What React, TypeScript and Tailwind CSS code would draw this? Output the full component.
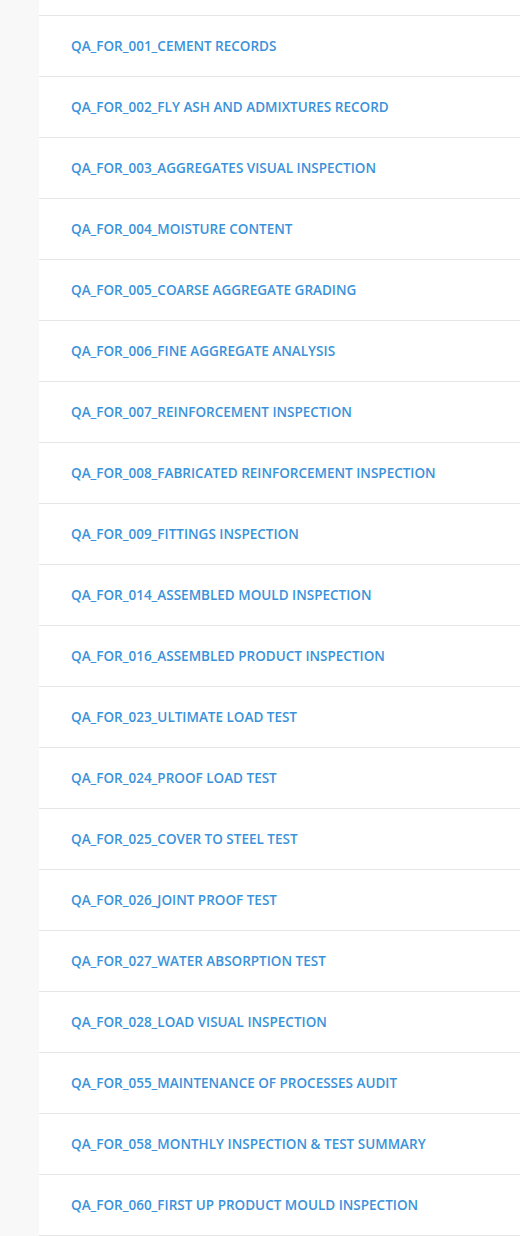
const forms = [
  "QA_FOR_001_CEMENT RECORDS",
  "QA_FOR_002_FLY ASH AND ADMIXTURES RECORD",
  "QA_FOR_003_AGGREGATES VISUAL INSPECTION",
  "QA_FOR_004_MOISTURE CONTENT",
  "QA_FOR_005_COARSE AGGREGATE GRADING",
  "QA_FOR_006_FINE AGGREGATE ANALYSIS",
  "QA_FOR_007_REINFORCEMENT INSPECTION",
  "QA_FOR_008_FABRICATED REINFORCEMENT INSPECTION",
  "QA_FOR_009_FITTINGS INSPECTION",
  "QA_FOR_014_ASSEMBLED MOULD INSPECTION",
  "QA_FOR_016_ASSEMBLED PRODUCT INSPECTION",
  "QA_FOR_023_ULTIMATE LOAD TEST",
  "QA_FOR_024_PROOF LOAD TEST",
  "QA_FOR_025_COVER TO STEEL TEST",
  "QA_FOR_026_JOINT PROOF TEST",
  "QA_FOR_027_WATER ABSORPTION TEST",
  "QA_FOR_028_LOAD VISUAL INSPECTION",
  "QA_FOR_055_MAINTENANCE OF PROCESSES AUDIT",
  "QA_FOR_058_MONTHLY INSPECTION & TEST SUMMARY",
  "QA_FOR_060_FIRST UP PRODUCT MOULD INSPECTION",
];

export default function App() {
  return (
    <div className="flex h-[1236px] w-[520px] overflow-hidden bg-[#f8f8f8] font-['Open_Sans',sans-serif]">
      <div className="w-[39px] shrink-0" />
      <div className="flex-1 bg-white">
        <div className="h-[16px] border-b border-[#e6e6e6]" />
        {forms.map((f) => (
          <a
            key={f}
            href="#"
            className="flex h-[61px] items-center border-b border-[#e6e6e6] pl-[32px] text-[13.5px] font-semibold text-[#3a92da]"
          >
            {f}
          </a>
        ))}
      </div>
    </div>
  );
}
